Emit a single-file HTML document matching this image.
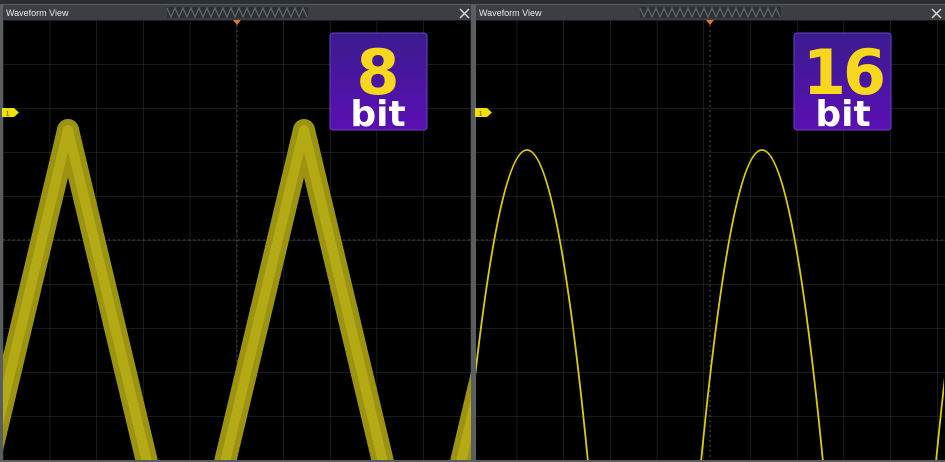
<!DOCTYPE html>
<html><head><meta charset="utf-8"><style>
html,body{margin:0;padding:0;background:#000;width:945px;height:462px;overflow:hidden;font-family:"Liberation Sans",sans-serif}
svg{display:block}
</style></head><body>
<svg width="945" height="462" viewBox="0 0 945 462" xmlns="http://www.w3.org/2000/svg">
<defs>
<pattern id="g" x="3" y="20" width="46.7" height="44" patternUnits="userSpaceOnUse">
<path d="M0 0V44M0 0H46.7" stroke="#333" stroke-width="1" fill="none"/>
</pattern>
<linearGradient id="bd" x1="0" y1="0" x2="0" y2="1"><stop offset="0" stop-color="#3a1c8e"/><stop offset="1" stop-color="#5a0fb4"/></linearGradient>
<clipPath id="c1"><rect x="3" y="20" width="468" height="440"/></clipPath>
<clipPath id="c2"><rect x="476" y="20" width="468" height="440"/></clipPath>
</defs>
<rect width="945" height="462" fill="#000"/>
<rect x="0" y="0" width="945" height="4" fill="#2a2e33"/>
<rect x="0" y="4" width="473" height="458" fill="#5a5d60"/>
<rect x="3" y="5" width="468" height="15" fill="#3b3e42"/>
<text x="6" y="16" font-size="9" fill="#e8e8e8">Waveform View</text>
<rect x="167" y="7" width="141" height="11" fill="#2c3034"/>
<path d="M167 8l4 9l4-9l4 9l4-9l4 9l4-9l4 9l4-9l4 9l4-9l4 9l4-9l4 9l4-9l4 9l4-9l4 9l4-9l4 9l4-9l4 9l4-9l4 9l4-9l4 9l4-9l4 9l4-9l4 9l4-9l4 9l4-9l4 9l4-9l4 9" stroke="#6a7075" stroke-width="1" fill="none"/>
<path d="M460 9l9 9M469 9l-9 9" stroke="#ddd" stroke-width="1.4"/>
<rect x="3" y="20" width="468" height="440" fill="#000"/>
<rect x="3" y="20" width="468" height="440" fill="url(#g)"/>
<path d="M237 20V460M3 240H471" stroke="#555" stroke-dasharray="2,3"/>
<path d="M233 20h8l-4 5z" fill="#e0782a"/>
<g clip-path="url(#c1)" fill="none" stroke-linejoin="round">
<path d="M-12.9 470L68 130L148.9 470M223.1 470L304 130L384.9 470M459.1 470L500 297" stroke="#9c9410" stroke-width="22"/>
<path d="M-12.9 470L68 130L148.9 470M223.1 470L304 130L384.9 470M459.1 470L500 297" stroke="#c3b919" stroke-width="10" opacity="0.6"/>
</g>
<path d="M2 108h12l5 4.5l-5 4.5h-12z" fill="#f0e000"/>
<text x="6" y="115.5" font-size="6" fill="#333">1</text>
<rect x="330" y="33" width="97" height="97" rx="3" fill="url(#bd)" stroke="#6a40c0"/>
<text x="378" y="94" font-size="62" font-weight="bold" fill="#f8d81c" text-anchor="middle" font-family="DejaVu Sans, sans-serif">8</text>
<text x="378" y="126" font-size="36" font-weight="bold" fill="#fff" text-anchor="middle" font-family="DejaVu Sans, sans-serif">bit</text>
<rect x="473" y="4" width="472" height="458" fill="#5a5d60"/>
<rect x="476" y="5" width="469" height="15" fill="#3b3e42"/>
<text x="479" y="16" font-size="9" fill="#e8e8e8">Waveform View</text>
<rect x="640" y="7" width="141" height="11" fill="#2c3034"/>
<path d="M640 8l4 9l4-9l4 9l4-9l4 9l4-9l4 9l4-9l4 9l4-9l4 9l4-9l4 9l4-9l4 9l4-9l4 9l4-9l4 9l4-9l4 9l4-9l4 9l4-9l4 9l4-9l4 9l4-9l4 9l4-9l4 9l4-9l4 9l4-9l4 9" stroke="#6a7075" stroke-width="1" fill="none"/>
<path d="M932 9l9 9M941 9l-9 9" stroke="#ddd" stroke-width="1.4"/>
<rect x="476" y="20" width="469" height="440" fill="#000"/>
<rect x="476" y="20" width="469" height="440" fill="url(#g)"/>
<path d="M710 20V460M476 240H945" stroke="#555" stroke-dasharray="2,3"/>
<path d="M706 20h8l-4 5z" fill="#e0782a"/>
<g clip-path="url(#c2)" fill="none" stroke="#d8cc10" stroke-width="1.8">
<path d="M466 462Q527 -162 588 462"/>
<path d="M701 462Q762 -162 823 462"/>
<path d="M936 462Q997 -162 1058 462"/>
</g>
<path d="M475 108h12l5 4.5l-5 4.5h-12z" fill="#f0e000"/>
<text x="479" y="115.5" font-size="6" fill="#333">1</text>
<rect x="794" y="33" width="97" height="97" rx="3" fill="url(#bd)" stroke="#6a40c0"/>
<text x="843" y="94" font-size="62" font-weight="bold" fill="#f8d81c" text-anchor="middle" font-family="DejaVu Sans, sans-serif" letter-spacing="-3">16</text>
<text x="843" y="126" font-size="36" font-weight="bold" fill="#fff" text-anchor="middle" font-family="DejaVu Sans, sans-serif">bit</text>
</svg>
</body></html>
